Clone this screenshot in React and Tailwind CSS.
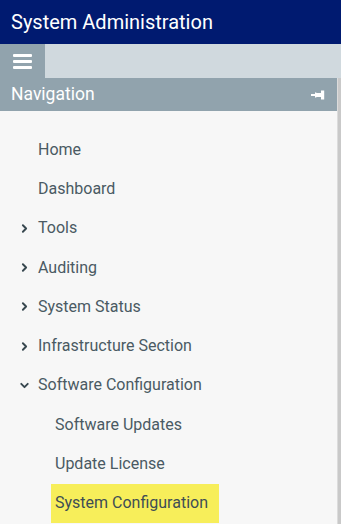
import React from "react";
import { ChevronRight, ChevronDown } from "lucide-react";

const items = [
  { label: "Home", level: 0 },
  { label: "Dashboard", level: 0 },
  { label: "Tools", level: 0, arrow: "right" },
  { label: "Auditing", level: 0, arrow: "right" },
  { label: "System Status", level: 0, arrow: "right" },
  { label: "Infrastructure Section", level: 0, arrow: "right" },
  { label: "Software Configuration", level: 0, arrow: "down" },
  { label: "Software Updates", level: 1 },
  { label: "Update License", level: 1 },
  { label: "System Configuration", level: 1, active: true },
];

function PinIcon() {
  return (
    <svg width="14" height="10" viewBox="0 0 14 10" fill="#ffffff">
      <rect x="0" y="4" width="5" height="2" />
      <path d="M4 2.2 L6 3 L10 3 L10 7 L6 7 L4 7.8 Z" />
      <rect x="10" y="0.5" width="3.2" height="9" />
    </svg>
  );
}

function NavItem({ item }) {
  return (
    <div className={`flex items-center h-[39.3px] ${item.level === 1 ? "pl-[51px]" : "pl-[18px]"}`}>
      {item.level === 0 && (
        <span className="w-[20px] flex items-center">
          {item.arrow === "right" && (
            <ChevronRight size={13} strokeWidth={3.5} className="text-[#37474f]" />
          )}
          {item.arrow === "down" && (
            <ChevronDown size={13} strokeWidth={3.5} className="text-[#37474f]" />
          )}
        </span>
      )}
      <span
        className={`h-full flex items-center text-[16px] ${
          item.level === 1 ? "px-[4px] pr-[11px]" : ""
        } ${item.active ? "bg-[#f7ee5a] text-[#3e4d55]" : "text-[#4a5a63]"}`}
      >
        {item.label}
      </span>
    </div>
  );
}

export default function App() {
  return (
    <div className="w-[344px] h-[524px] overflow-hidden bg-white font-['Roboto',sans-serif]">
      <div className="w-[341px] h-[44px] bg-[#001a70] flex items-center pl-[11px]">
        <h1 className="text-white text-[20px] leading-none">System Administration</h1>
      </div>
      <div className="w-[341px] h-[34px] bg-[#d0d9de] flex">
        <button className="w-[45px] h-full bg-[#91a3ad] flex flex-col items-center justify-center gap-[3px]">
          <span className="block w-[19px] h-[3px] bg-white rounded-[1px]" />
          <span className="block w-[19px] h-[3px] bg-white rounded-[1px]" />
          <span className="block w-[19px] h-[3px] bg-white rounded-[1px]" />
        </button>
      </div>
      <div className="flex">
        <div className="w-[337px] h-[446px] bg-[#f7f7f7] flex flex-col">
          <div className="h-[33px] bg-[#91a3ad] flex items-center justify-between pl-[11px] pr-[12px]">
            <span className="text-white text-[17.5px]">Navigation</span>
            <PinIcon />
          </div>
          <div className="pt-[19px]">
            {items.map((item) => (
              <NavItem key={item.label} item={item} />
            ))}
          </div>
        </div>
        <div className="w-[4px] h-[446px] bg-[#c9c9c9] border-l border-[#dcdcdc]" />
      </div>
    </div>
  );
}
